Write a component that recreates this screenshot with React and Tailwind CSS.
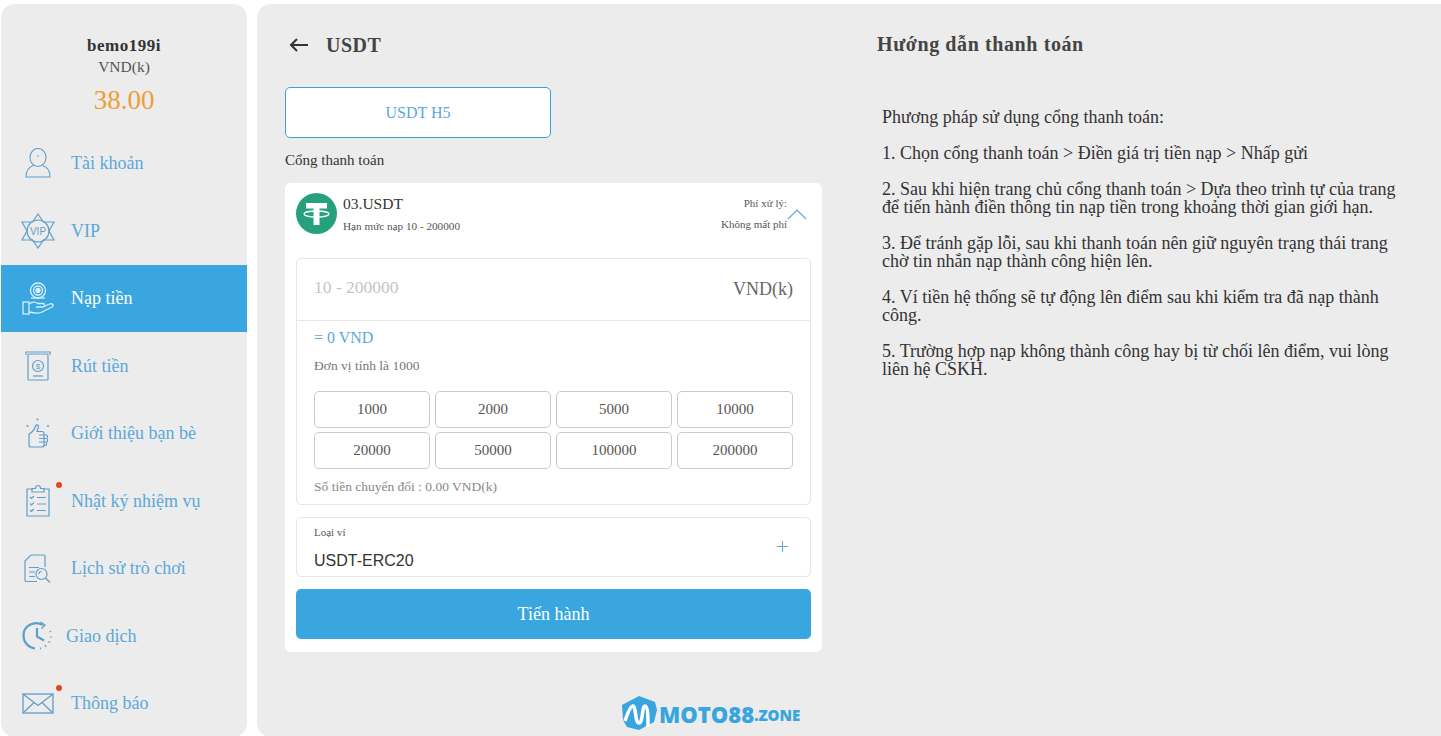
function UserIcon() {
    return (
        <svg width="26" height="30" viewBox="0 0 26 30" fill="none" stroke="currentColor" strokeWidth="1.1">
            <ellipse cx="13" cy="9.5" rx="8" ry="9" />
            <path d="M8.5 17.5C3.5 19 1 23 1 29H25C25 23 22.5 19 17.5 17.5" />
            <path d="M12 8H14" />
        </svg>
    )
}

function VipIcon() {
    return (
        <svg width="34" height="36" viewBox="0 0 34 36" fill="none" stroke="currentColor" strokeWidth="1.2">
            <path d="M17 1L22.5 9H33L28 18L33 27H22.5L17 35L11.5 27H1L6 18L1 9H11.5Z" />
            <circle cx="17" cy="18" r="11" />
            <text x="17" y="21.5" fontSize="10" textAnchor="middle" fill="currentColor" stroke="none" fontFamily="Liberation Sans">VIP</text>
        </svg>
    )
}

function DepositIcon() {
    return (
        <svg width="32" height="33" viewBox="0 0 32 33" fill="none" stroke="currentColor" strokeWidth="1.3">
            <circle cx="16" cy="8.5" r="7.5" />
            <circle cx="16" cy="8.5" r="4.5" />
            <circle cx="16" cy="8.5" r="2" fill="currentColor" />
            <path d="M9 16H23" />
            <rect x="1" y="20" width="6" height="12" />
            <path d="M7 22C10 19.5 13 19.5 16 21.5H21C23 21.5 23 25 21 25H14M21 25L27.5 22C31 21 32 23.5 30 25L19 30.5C15 32 11 31 7 30" />
        </svg>
    )
}

function WithdrawIcon() {
    return (
        <svg width="26" height="30" viewBox="0 0 26 30" fill="none" stroke="currentColor" strokeWidth="1.2">
            <path d="M1 4V1H25V4" />
            <rect x="3" y="3" width="20" height="26" rx="1" />
            <circle cx="13" cy="15" r="5.5" />
            <text x="13" y="18" fontSize="8" textAnchor="middle" fill="currentColor" stroke="none" fontFamily="Liberation Sans">$</text>
            <path d="M8 25H18" />
        </svg>
    )
}

function ThumbIcon() {
    return (
        <svg width="24" height="30" viewBox="0 0 24 30" fill="none" stroke="currentColor" strokeWidth="1.2">
            <path d="M3 16V27C3 28.5 4 29 5 29H16C17.5 29 18 28 18 27V15C18 14 17.5 13.5 16 13.5H11L12.5 8.5C12.5 6.5 10 6.5 9.5 8C8.5 11.5 6 14.5 3 16Z" />
            <path d="M13 17H20.5C22 17 22 20.5 20.5 20.5H13M13 20.5H20.5C22 20.5 22 24 20.5 24H13M13 24H19.5C21 24 21 27.5 19.5 27.5H17" />
            <circle cx="11.5" cy="1.5" r="1" fill="currentColor" stroke="none" />
            <circle cx="1.5" cy="8" r="1" fill="currentColor" stroke="none" />
            <circle cx="22" cy="8" r="1" fill="currentColor" stroke="none" />
        </svg>
    )
}

function ClipboardIcon() {
    return (
        <svg width="24" height="33" viewBox="0 0 24 33" fill="none" stroke="currentColor" strokeWidth="1.2">
            <path d="M7 5H1V32H23V5H17" />
            <path d="M6 8V4.5H9.5C9.5 0.5 14.5 0.5 14.5 4.5H18V8Z" />
            <path d="M4 13L5.5 14.5L8 12M4 19.5L5.5 21L8 18.5M4 26L5.5 27.5L8 25" />
            <path d="M11 13.5H20M11 20H20M11 26.5H20" />
        </svg>
    )
}

function HistoryIcon() {
    return (
        <svg width="27" height="29" viewBox="0 0 27 29" fill="none" stroke="currentColor" strokeWidth="1.2">
            <path d="M13 27.5H2C1.5 27.5 1 27 1 26.5V7L7 1H20C20.5 1 21 1.5 21 2V13" />
            <path d="M5 13.5H15M5 18H11M5 22.5H11" />
            <circle cx="17.5" cy="20" r="5.5" />
            <path d="M21.5 24L26 28.5" />
            <path d="M15 20C15 18.5 16 17.5 17.5 17.5" />
        </svg>
    )
}

function ClockIcon() {
    return (
        <svg width="31" height="29" viewBox="0 0 31 29" fill="none" stroke="currentColor" strokeWidth="2.2">
            <path d="M21 4C12 -1 1.5 5 1.5 14.5C1.5 21.5 6.5 26.5 13 27.5" />
            <path d="M18.5 1L23 4L19.5 7.5" strokeWidth="1.3" />
            <path d="M15 7V15.5L22 19.5" />
            <path d="M18 27.5L19 27.2M23 25.5L24 24.5M27 21.5L27.5 20.5M29 16.5V15.5M28.5 11L28 10" strokeWidth="2" />
        </svg>
    )
}

function MailIcon() {
    return (
        <svg width="32" height="21" viewBox="0 0 32 21" fill="none" stroke="currentColor" strokeWidth="1.3">
            <rect x="1" y="1" width="30" height="19" />
            <path d="M1 1L16 12.5L31 1M1 20L12 9.5M31 20L20 9.5" />
        </svg>
    )
}

function TetherIcon() {
    return (
        <svg width="41" height="41" viewBox="0 0 41 41">
            <circle cx="20.5" cy="20.5" r="20.5" fill="#26a17b" />
            <path d="M10 10H31V15.5H23.5V32H17.5V15.5H10Z" fill="#fff" />
            <ellipse cx="20.5" cy="21" rx="12.5" ry="3" fill="none" stroke="#fff" strokeWidth="1.3" />
        </svg>
    )
}

function LogoMark() {
    return (
        <svg width="35" height="35" viewBox="0 0 35 35">
            <path d="M17 0L33 6L35 14L32 26L17 34L5 31L1 24L0 9Z" fill="#38a5e0" />
            <path d="M3 25C6 16 9 10 11 10C14 10 13 27 17 27C21 27 20 10 23 10C26 10 26 22 26 31" fill="none" stroke="#fff" strokeWidth="3.5" />
        </svg>
    )
}

const MENU = [
    { label: "Tài khoản", icon: <UserIcon /> },
    { label: "VIP", icon: <VipIcon /> },
    { label: "Nạp tiền", icon: <DepositIcon />, active: true },
    { label: "Rút tiền", icon: <WithdrawIcon /> },
    { label: "Giới thiệu bạn bè", icon: <ThumbIcon /> },
    { label: "Nhật ký nhiệm vụ", icon: <ClipboardIcon />, dot: true },
    { label: "Lịch sử trò chơi", icon: <HistoryIcon /> },
    { label: "Giao dịch", icon: <ClockIcon />, narrow: true },
    { label: "Thông báo", icon: <MailIcon />, dot: true },
]

const AMOUNTS = [1000, 2000, 5000, 10000, 20000, 50000, 100000, 200000]

const GUIDE = [
    "Phương pháp sử dụng cổng thanh toán:",
    "1. Chọn cổng thanh toán > Điền giá trị tiền nạp > Nhấp gửi",
    "2. Sau khi hiện trang chủ cổng thanh toán > Dựa theo trình tự của trang để tiến hành điền thông tin nạp tiền trong khoảng thời gian giới hạn.",
    "3. Để tránh gặp lỗi, sau khi thanh toán nên giữ nguyên trạng thái trang chờ tin nhắn nạp thành công hiện lên.",
    "4. Ví tiền hệ thống sẽ tự động lên điểm sau khi kiểm tra đã nạp thành công.",
    "5. Trường hợp nạp không thành công hay bị từ chối lên điểm, vui lòng liên hệ CSKH.",
]

function MenuRow({ label, icon, active, dot, narrow }) {
    return (
        <div className={`relative flex flex-row items-center h-[67.5px] pl-[20px] ${active ? "bg-[#3aa6e0] text-white" : "text-[#5ba8da]"}`}>
            <div className={`flex items-center ${narrow ? "w-[45px]" : "w-[50px]"}`}>
                <div className="flex justify-center w-[33px]">
                    <span className={`flex ${active ? "text-[#d8f0fb]" : "text-[#5f9fcb]"}`}>{icon}</span>
                </div>
            </div>
            <span className="text-[18px] leading-none">{label}</span>
            {/* red notification dot */}
            {dot && <span className="absolute left-[55px] top-[15px] h-[6px] w-[6px] rounded-full bg-[#e0481c]" />}
        </div>
    )
}

export default function App() {
    return (
        <div className="flex flex-row h-[736px] overflow-hidden bg-white pt-[4px] pl-[1px] font-['Liberation_Serif',serif] text-[#333]">
            <aside className="w-[246px] h-[733px] shrink-0 rounded-[14px] bg-[#ececec] overflow-hidden">
                <div className="flex flex-col items-center h-[125.5px] pt-[33px]">
                    <span className="text-[17px] leading-[18px] font-bold tracking-[0.5px] text-[#333]">bemo199i</span>
                    <span className="text-[15.5px] leading-[18px] mt-[3px] text-[#555]">VND(k)</span>
                    <span className="text-[27px] leading-[30px] mt-[9px] text-[#ee9d37]">38.00</span>
                </div>
                {MENU.map((item) => (
                    <MenuRow key={item.label} {...item} />
                ))}
            </aside>

            <main className="flex flex-row ml-[10px] flex-1 h-[733px] rounded-l-[14px] bg-[#ececec] pl-[28px] overflow-hidden">
                <section className="flex flex-col w-[537px] shrink-0">
                    <div className="flex flex-row items-center h-[83px] pb-[1px]">
                        <span className="w-[41px] pl-[4px] flex items-center">
                            <svg width="20" height="14" viewBox="0 0 20 14" fill="none" stroke="#333" strokeWidth="2">
                                <path d="M19 7H2M8 1L2 7L8 13" />
                            </svg>
                        </span>
                        <span className="text-[20px] font-bold text-[#444] tracking-[0.5px]">USDT</span>
                    </div>
                    <div className="flex items-center justify-center w-[266px] h-[51px] rounded-[5px] border border-[#3d9fd6] bg-white text-[16px] text-[#5ba8da]">
                        USDT H5
                    </div>
                    <div className="mt-[13px] text-[15px] leading-[18px] text-[#333]">Cổng thanh toán</div>

                    <div className="mt-[14px] w-[537px] h-[469px] rounded-[6px] bg-white px-[11px]">
                        <div className="relative flex flex-row h-[75px] pt-[10px]">
                            <TetherIcon />
                            <div className="ml-[6px] flex flex-col">
                                <span className="text-[15.5px] leading-[20px] mt-[1px] text-[#333]">03.USDT</span>
                                <span className="mt-[5px] text-[11.2px] leading-[14px] text-[#555]">Hạn mức nạp 10 - 200000</span>
                            </div>
                            <div className="ml-auto mr-[24px] flex flex-col items-end text-[11px] text-[#555] leading-[14px] pt-[3px]">
                                <span>Phí xử lý:</span>
                                <span className="mt-[7px]">Không mất phí</span>
                            </div>
                            <svg className="absolute right-[4px] top-[25px]" width="20" height="12" viewBox="0 0 20 12" fill="none" stroke="#5ba8da" strokeWidth="1.2">
                                <path d="M1 11L10 2L19 11" />
                            </svg>
                        </div>

                        <div className="rounded-[5px] border border-[#e6e6e6]">
                            <div className="flex flex-row items-center justify-between h-[62px] border-b border-[#e6e6e6] px-[17px]">
                                <span className="text-[17.5px] mb-[5px] text-[#c4c4c4]">10 - 200000</span>
                                <span className="text-[18px] text-[#666]">VND(k)</span>
                            </div>
                            <div className="px-[17px]">
                                <div className="mt-[8px] text-[16px] leading-[18px] text-[#5ba8da]">= 0 VND</div>
                                <div className="mt-[11px] text-[13.5px] leading-[16px] text-[#777]">Đơn vị tính là 1000</div>
                                <div className="mt-[17px] grid grid-cols-4 gap-x-[5px] gap-y-[4px]">
                                    {AMOUNTS.map((n) => (
                                        <div key={n} className="flex items-center justify-center h-[37px] pb-[1px] rounded-[5px] border border-[#c9c9c9] text-[15px] text-[#555]">
                                            {n}
                                        </div>
                                    ))}
                                </div>
                                <div className="mt-[10px] pb-[9px] text-[13.5px] leading-[16px] text-[#888]">Số tiền chuyển đổi : 0.00 VND(k)</div>
                            </div>
                        </div>

                        <div className="relative mt-[12px] h-[60px] rounded-[5px] border border-[#e6e6e6] pl-[17px]">
                            <div className="pt-[8px] text-[11px] leading-[13px] text-[#555]">Loại ví</div>
                            <div className="mt-[13px] font-['Liberation_Sans',sans-serif] text-[16px] leading-[18px] text-[#333]">USDT-ERC20</div>
                            <span className="absolute right-[22px] top-[23px] flex">
                                <svg width="11" height="11" viewBox="0 0 11 11" stroke="#5ba8da" strokeWidth="1">
                                    <path d="M5.5 0V11M0 5.5H11" />
                                </svg>
                            </span>
                        </div>

                        <div className="mt-[12px] flex items-center justify-center h-[50px] rounded-[5px] bg-[#3aa6e0] text-[18px] text-white">
                            Tiến hành
                        </div>
                    </div>

                    <div className="mt-[44px] flex flex-row items-center pl-[337px]">
                        <LogoMark />
                        <span className="ml-[2px] font-['Open_Sans',sans-serif] text-[22px] leading-none font-extrabold text-[#38a5e0]">MOTO88</span>
                        <span className="mt-[4px] font-['Open_Sans',sans-serif] text-[15px] leading-none font-extrabold text-[#38a5e0]">.ZONE</span>
                    </div>
                </section>

                <section className="ml-[55px] w-[530px]">
                    <h2 className="pt-[29px] text-[20px] leading-[23px] font-bold text-[#444] tracking-[0.6px]">Hướng dẫn thanh toán</h2>
                    <div className="mt-[52px] ml-[5px] flex flex-col gap-[18px] w-[520px]">
                        {GUIDE.map((p) => (
                            <p key={p} className="text-[18px] leading-[18px] text-[#333]">{p}</p>
                        ))}
                    </div>
                </section>
            </main>
        </div>
    )
}
